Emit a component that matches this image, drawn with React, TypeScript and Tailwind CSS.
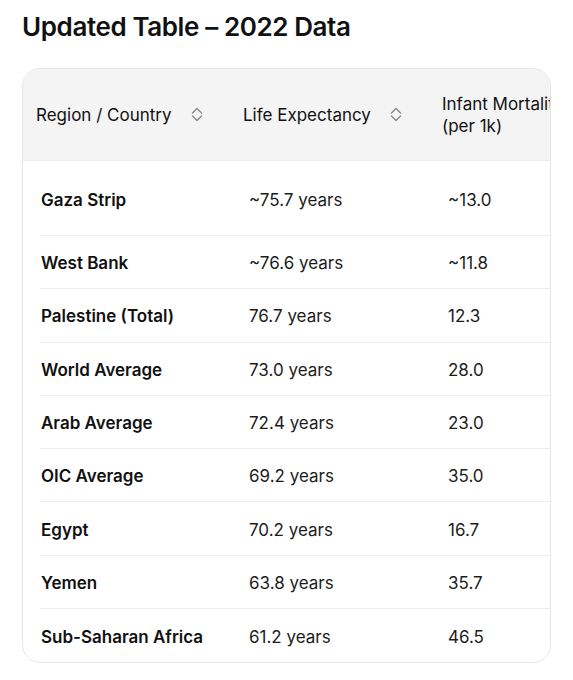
import React from "react";

const rows = [
  { name: "Gaza Strip", life: "~75.7 years", infant: "~13.0" },
  { name: "West Bank", life: "~76.6 years", infant: "~11.8" },
  { name: "Palestine (Total)", life: "76.7 years", infant: "12.3" },
  { name: "World Average", life: "73.0 years", infant: "28.0" },
  { name: "Arab Average", life: "72.4 years", infant: "23.0" },
  { name: "OIC Average", life: "69.2 years", infant: "35.0" },
  { name: "Egypt", life: "70.2 years", infant: "16.7" },
  { name: "Yemen", life: "63.8 years", infant: "35.7" },
  { name: "Sub-Saharan Africa", life: "61.2 years", infant: "46.5" },
];

function SortIcon() {
  return (
    <svg width="12" height="15" viewBox="0 0 12 15" fill="none" stroke="#888" strokeWidth="1.4" strokeLinecap="round" strokeLinejoin="round">
      <path d="M1.5 6 L6 1.5 L10.5 6" />
      <path d="M1.5 9 L6 13.5 L10.5 9" />
    </svg>
  );
}

export default function App() {
  return (
    <div className="min-h-screen bg-white pl-[22px] pt-[11px] font-['Inter','Liberation_Sans',sans-serif] text-[#111]">
      <h1 className="text-[26px] leading-[32px] font-semibold tracking-[-0.4px]">Updated Table – 2022 Data</h1>

      <div className="mt-[25px] w-[529px] overflow-hidden rounded-[18px] border border-[#e6e6e6]">
        {/* header */}
        <div className="grid h-[92px] grid-cols-[207px_199px_200px] items-center bg-[#f4f4f4] pl-[13px] text-[17px] leading-[22px] border-b border-[#ececec]">
          <div className="flex items-center gap-[19px] whitespace-nowrap">
            <span>Region / Country</span>
            <SortIcon />
          </div>
          <div className="flex items-center gap-[19px] whitespace-nowrap">
            <span>Life Expectancy</span>
            <SortIcon />
          </div>
          <div className="whitespace-nowrap">
            Infant Mortality
            <br />
            (per 1k)
          </div>
        </div>

        {/* body */}
        <div className="ml-[17px] text-[17px] leading-[22px]">
          {rows.map((r, i) => (
            <div
              key={r.name}
              className={
                i === 0
                  ? "grid h-[75px] grid-cols-[208px_199px_200px] items-center pl-px pt-[3px] border-b border-[#ececec]"
                  : i === rows.length - 1
                  ? "grid h-[53px] grid-cols-[208px_199px_200px] items-center pl-px pt-[2px]"
                  : "grid h-[53.3px] grid-cols-[208px_199px_200px] items-center pl-px pt-[2px] border-b border-[#ececec]"
              }
            >
              <div className="font-semibold whitespace-nowrap">{r.name}</div>
              <div className="text-[#1c1c1c] whitespace-nowrap">{r.life}</div>
              <div className="text-[#1c1c1c] whitespace-nowrap">{r.infant}</div>
            </div>
          ))}
        </div>
      </div>
    </div>
  );
}
